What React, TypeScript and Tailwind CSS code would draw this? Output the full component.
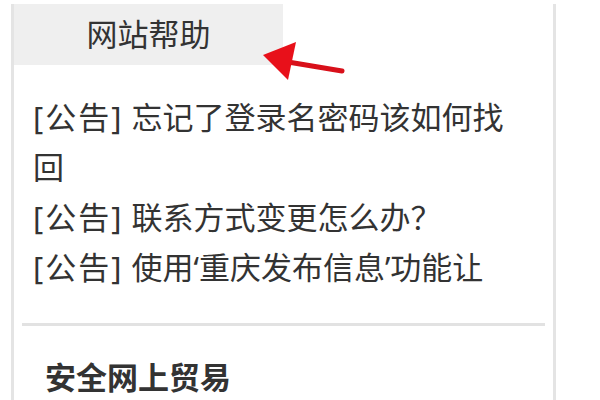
const notices = [
  "忘记了登录名密码该如何找回",
  "联系方式变更怎么办？",
  "使用‘重庆发布信息’功能让",
];

function RedArrow() {
  return (
    <svg
      className="absolute left-[258px] top-[38px]"
      width="92"
      height="48"
      viewBox="0 0 92 48"
    >
      <line x1="30" y1="24" x2="84" y2="33" stroke="#d8101a" strokeWidth="5" strokeLinecap="round" />
      <polygon points="5,17 38,4 30,42" fill="#e8101a" />
    </svg>
  );
}

export default function App() {
  return (
    <div
      className="relative h-[400px] w-[600px] overflow-hidden bg-white text-[#333]"
      style={{ fontFamily: '"Noto Sans", "Noto Sans CJK SC", sans-serif' }}
    >
      <div className="ml-[11px] h-full w-[545px] border-x-[3px] border-[#e4e4e4]">
        <div className="mt-[4px] flex h-[61px] w-[269px] items-center justify-center bg-[#efefef] text-[31px] leading-none">
          网站帮助
        </div>
        <ul className="mt-[27px] w-[511px] pl-[19px] text-[31px] leading-[50px]">
          {notices.map((n) => (
            <li key={n}>
              <span className="tracking-[2px]">[公告]</span> {n}
            </li>
          ))}
        </ul>
        <div className="mx-[8px] mt-[31px] h-[3px] bg-[#e2e2e2]" />
        <h3 className="mt-[36px] pl-[31px] text-[31px] font-bold leading-none">安全网上贸易</h3>
      </div>
      <RedArrow />
    </div>
  );
}
